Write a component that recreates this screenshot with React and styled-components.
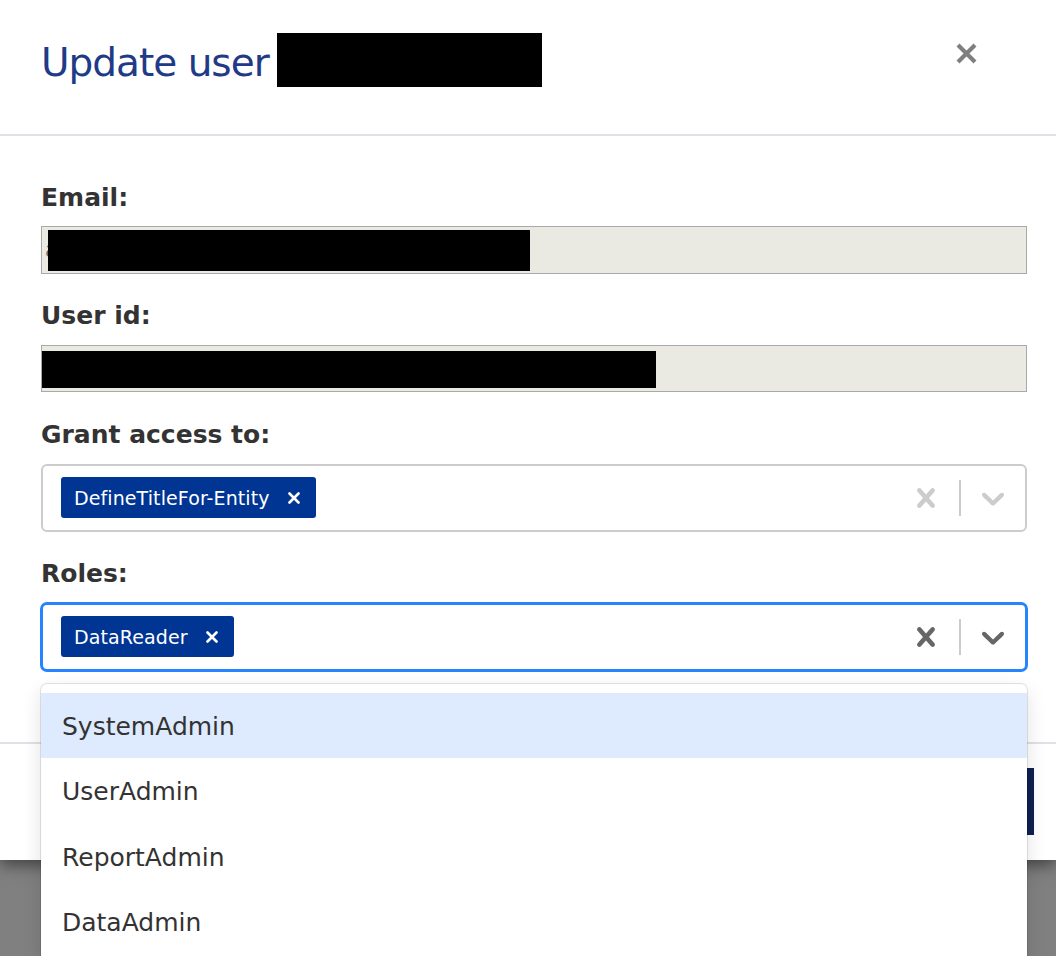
import React from 'react';
import styled, { createGlobalStyle, css } from 'styled-components';

const GlobalStyle = createGlobalStyle`
  html, body {
    margin: 0;
    padding: 0;
    height: 956px;
    overflow: hidden;
    background: #808080;
  }
  * {
    box-sizing: border-box;
  }
`;

const Backdrop = styled.div`
  width: 1056px;
  height: 956px;
  background: #808080;
  overflow: hidden;
  font-family: "DejaVu Sans", Verdana, sans-serif;
`;

const Modal = styled.div`
  width: 100%;
  background: #ffffff;
  display: flex;
  flex-direction: column;
  box-shadow: 0 5px 15px rgba(0, 0, 0, 0.5);
`;

const Header = styled.div`
  height: 136px;
  display: flex;
  align-items: flex-start;
  padding: 33px 78px 0 41px;
  border-bottom: 2px solid #dee2e6;
`;

const Title = styled.h1`
  margin: 0;
  display: flex;
  align-items: flex-start;
  height: 54px;
  font-size: 39px;
  line-height: 54px;
  font-weight: normal;
  letter-spacing: -1px;
  color: #1f3a86;
`;

const TitleText = styled.span`
  padding-top: 3px;
`;

// black bar that hides the user name / ids in the screenshot
const Redaction = styled.span`
  display: inline-block;
  background: #000;
  width: ${p => p.w}px;
  height: ${p => p.h}px;
  ${p => p.overlay && css`
    position: absolute;
    left: ${p.left}px;
    top: ${p.top}px;
  `}
`;

const TitleRedaction = styled(Redaction)`
  margin-left: 8px;
`;

const CloseButton = styled.button`
  margin-left: auto;
  margin-top: 9px;
  width: 23px;
  height: 23px;
  padding: 0;
  border: 0;
  background: transparent;
  color: #7f7f7f;
  cursor: pointer;
  display: flex;
`;

const Body = styled.div`
  padding: 46.5px 29px 71.25px 41px;
  display: flex;
  flex-direction: column;
  gap: 27.75px;
`;

const Group = styled.div`
  display: flex;
  flex-direction: column;
  position: relative;
`;

const Label = styled.label`
  font-size: 25px;
  line-height: 30px;
  font-weight: bold;
  color: #333333;
  margin-bottom: 13.5px;
`;

const ReadOnlyField = styled.div`
  position: relative;
  height: 47.5px;
  background: #eae9e2;
  border: 1px solid #a9a9a9;
  display: flex;
  align-items: center;
  padding-left: 3px;
  font-size: 21px;
  color: #6d6d6d;
  overflow: hidden;
`;

const Select = styled.div`
  height: 68px;
  border: 2px solid ${p => (p.focused ? '#2684ff' : '#cccccc')};
  border-radius: 6px;
  background: #fff;
  display: flex;
  align-items: center;
  padding-left: 18px;
  ${p => p.focused && css`
    box-shadow: 0 0 0 1px #2684ff;
  `}
`;

const ValueList = styled.div`
  flex: 1;
  display: flex;
  align-items: center;
  gap: 6px;
`;

const Chip = styled.div`
  height: 41px;
  background: #003594;
  border-radius: 3px;
  display: flex;
  align-items: center;
  color: #fff;
  font-size: 19px;
  letter-spacing: 0.1px;
  padding-left: 13px;
`;

const ChipRemove = styled.span`
  display: flex;
  align-items: center;
  padding: 0 16px 0 18px;
  height: 100%;
`;

const Indicators = styled.div`
  display: flex;
  align-items: center;
  color: ${p => (p.focused ? '#666666' : '#cccccc')};
`;

const IndicatorIcon = styled.svg`
  width: 38px;
  height: 38px;
  fill: currentColor;
  flex-shrink: 0;
`;

const Separator = styled.span`
  width: 2px;
  height: 36px;
  background: #cccccc;
  margin: 0 13px 0 14px;
`;

const Menu = styled.div`
  position: absolute;
  z-index: 10;
  left: 0;
  right: 0;
  top: calc(100% + 13px);
  background: #fff;
  border-radius: 6px;
  padding: 9px 0;
  box-shadow: 0 0 0 1px rgba(0, 0, 0, 0.1), 0 7px 20px rgba(0, 0, 0, 0.12);
`;

const Option = styled.div`
  height: 65.5px;
  display: flex;
  align-items: center;
  padding-left: 21px;
  padding-top: 1px;
  font-size: 25px;
  color: #333333;
  background: ${p => (p.active ? '#deebff' : 'transparent')};
`;

const Footer = styled.div`
  border-top: 2px solid #dee2e6;
  display: flex;
  justify-content: flex-end;
  padding: 24px 22px 25px;
`;

const PrimaryButton = styled.button`
  height: 67px;
  padding: 0 44px;
  border: 0;
  border-radius: 0;
  background: #0e2150;
  color: #fff;
  font-family: inherit;
  font-size: 22px;
`;

const clearPath =
  'M14.348 14.849c-0.469 0.469-1.229 0.469-1.697 0l-2.651-3.030-2.651 3.029c-0.469 0.469-1.229 0.469-1.697 0-0.469-0.469-0.469-1.229 0-1.697l2.758-3.15-2.759-3.152c-0.469-0.469-0.469-1.228 0-1.697s1.228-0.469 1.697 0l2.652 3.031 2.651-3.031c0.469-0.469 1.228-0.469 1.697 0s0.469 1.229 0 1.697l-2.758 3.152 2.758 3.15c0.469 0.469 0.469 1.229 0 1.698z';
const chevronPath =
  'M4.516 7.548c0.436-0.446 1.043-0.481 1.576 0l3.908 3.747 3.908-3.747c0.533-0.481 1.141-0.446 1.574 0 0.436 0.445 0.408 1.197 0 1.615-0.406 0.418-4.695 4.502-4.695 4.502-0.217 0.223-0.502 0.335-0.787 0.335s-0.57-0.112-0.789-0.335c0 0-4.287-4.084-4.695-4.502s-0.436-1.17 0-1.615z';

const SmallX = () => (
  <svg width="12" height="12" viewBox="0 0 12 12">
    <path d="M1.5 1.5L10.5 10.5M10.5 1.5L1.5 10.5" stroke="#fff" strokeWidth="2.6" strokeLinecap="round" />
  </svg>
);

const MultiSelect = ({ values, focused, children }) => (
  <Select focused={focused}>
    <ValueList>
      {values.map(v => (
        <Chip key={v}>
          {v}
          <ChipRemove>
            <SmallX />
          </ChipRemove>
        </Chip>
      ))}
    </ValueList>
    <Indicators focused={focused}>
      <IndicatorIcon viewBox="0 0 20 20">
        <path d={clearPath} />
      </IndicatorIcon>
      <Separator />
      <IndicatorIcon viewBox="0 0 20 20" style={{ marginRight: 13 }}>
        <path d={chevronPath} />
      </IndicatorIcon>
    </Indicators>
    {children}
  </Select>
);

const roleOptions = ['SystemAdmin', 'UserAdmin', 'ReportAdmin', 'DataAdmin'];

export default function App() {
  return (
    <>
      <GlobalStyle />
      <Backdrop>
        <Modal>
          <Header>
            <Title>
              <TitleText>Update user</TitleText>
              <TitleRedaction w={265} h={54} />
            </Title>
            <CloseButton aria-label="Close">
              <svg width="23" height="23" viewBox="0 0 23 23">
                <path d="M3 3L20 20M20 3L3 20" stroke="currentColor" strokeWidth="4.2" />
              </svg>
            </CloseButton>
          </Header>

          <Body>
            <Group>
              <Label>Email:</Label>
              <ReadOnlyField>
                a
                <Redaction overlay left={6} top={3} w={482} h={41} />
              </ReadOnlyField>
            </Group>

            <Group>
              <Label>User id:</Label>
              <ReadOnlyField>
                <Redaction overlay left={0} top={5} w={614} h={37} />
              </ReadOnlyField>
            </Group>

            <Group>
              <Label>Grant access to:</Label>
              <MultiSelect values={['DefineTitleFor-Entity']} />
            </Group>

            <Group>
              <Label>Roles:</Label>
              <MultiSelect values={['DataReader']} focused />
              <Menu>
                {roleOptions.map((r, i) => (
                  <Option key={r} active={i === 0}>
                    {r}
                  </Option>
                ))}
              </Menu>
            </Group>
          </Body>

          <Footer>
            <PrimaryButton>Update</PrimaryButton>
          </Footer>
        </Modal>
      </Backdrop>
    </>
  );
}
